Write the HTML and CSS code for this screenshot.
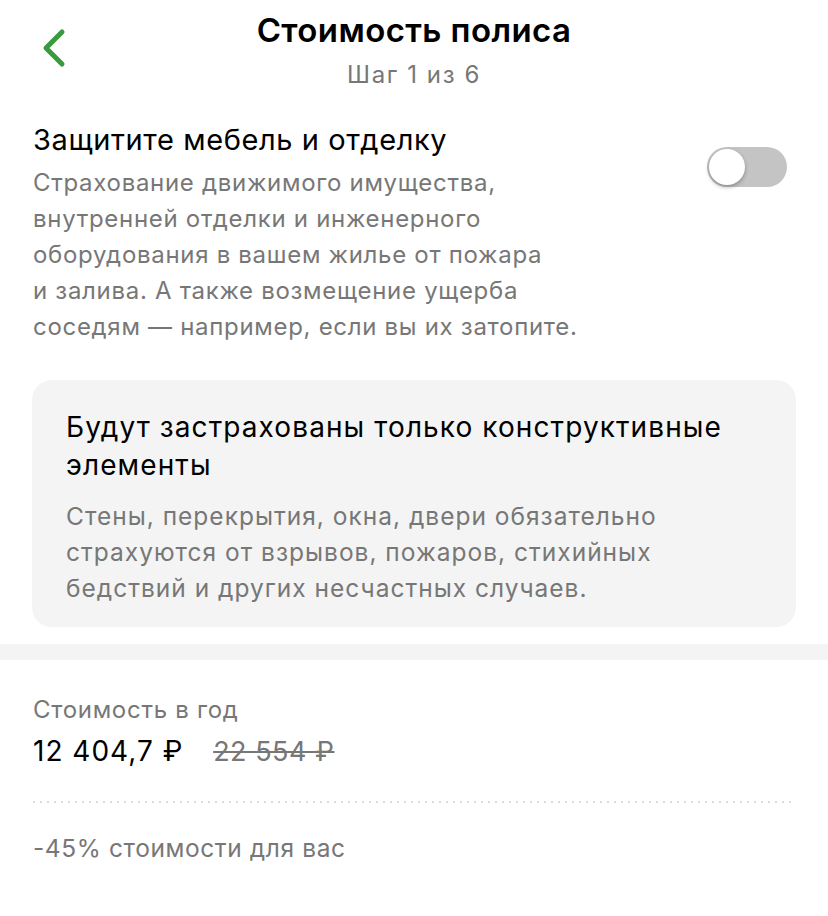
FILE: index.html
```html
<!DOCTYPE html>
<html>
    <head>
        <meta charset="UTF-8">
        <title>Стоимость полиса</title>
        <link rel="stylesheet" href="styles.css">
    </head>
    <body>
        <!-- шапка с кнопкой назад -->
        <div class="header">
            <a class="back" href="javascript:;">
                <svg width="28" height="44" viewBox="0 0 28 44">
                    <path d="M21 7 L5 23 L21 39" fill="none" stroke="#3a9a3f" stroke-width="5" stroke-linecap="round" stroke-linejoin="round"/>
                </svg>
            </a>
            <div class="title">Стоимость полиса</div>
            <div class="step">Шаг 1 из 6</div>
        </div>

        <div class="page">
            <div class="option">
                <div class="option-text">
                    <div class="option-title">Защитите мебель и отделку</div>
                    <div class="option-desc">Страхование движимого имущества,<br>внутренней отделки и инженерного<br>оборудования в вашем жилье от пожара<br>и залива. А также возмещение ущерба<br>соседям — например, если вы их затопите.</div>
                </div>
                <a class="toggle" href="javascript:;"><span class="knob"></span></a>
            </div>

            <div class="card">
                <div class="card-title">Будут застрахованы только конструктивные<br>элементы</div>
                <div class="card-desc">Стены, перекрытия, окна, двери обязательно<br>страхуются от взрывов, пожаров, стихийных<br>бедствий и других несчастных случаев.</div>
            </div>
        </div>

        <div class="divider"></div>

        <div class="page price">
            <div class="price-label">Стоимость в год</div>
            <div class="price-row">
                <span class="price-new">12 404,7 ₽</span>
                <span class="price-old">22 554 ₽</span>
            </div>
            <div class="dots"></div>
            <div class="discount">-45% стоимости для вас</div>
        </div>
    </body>
</html>
```

FILE: styles.css
```css
*{
    margin: 0;
    padding: 0;
    box-sizing: border-box;
}
body{
    width: 828px;
    background-color: #fff;
    font-family: "Inter", "Open Sans", sans-serif;
    color: #000;
}
.header{
    position: relative;
    padding-top: 8px;
    text-align: center;
}
.back{
    position: absolute;
    left: 41px;
    top: 25px;
    display: block;
    width: 28px;
    height: 44px;
}
.title{
    font-size: 33px;
    line-height: 44px;
    font-weight: 600;
    letter-spacing: 0.4px;
}
.step{
    margin-top: 8px;
    font-size: 24px;
    line-height: 30px;
    letter-spacing: 1.6px;
    color: #777;
}
.page{
    padding: 0 32px;
}
.option{
    display: flex;
    justify-content: space-between;
    margin-top: 32px;
}
.option-text{
    padding-left: 1px;
}
.option-title{
    font-size: 29px;
    line-height: 36px;
    letter-spacing: 0.6px;
}
.option-desc{
    margin-top: 7px;
    font-size: 24px;
    line-height: 36px;
    letter-spacing: 0.7px;
    color: #777;
}
.toggle{
    display: block;
    width: 80px;
    height: 40px;
    margin: 25px 9px 0 0;
    border-radius: 20px;
    background-color: #c4c4c4;
    padding: 2px;
}
.knob{
    display: block;
    width: 36px;
    height: 36px;
    border-radius: 50%;
    background-color: #fff;
    box-shadow: 0 2px 4px rgba(0, 0, 0, 0.3);
}
.card{
    margin-top: 35px;
    padding: 28px 34px 21px;
    border-radius: 20px;
    background-color: #f4f4f4;
}
.card-title{
    font-size: 28px;
    line-height: 38px;
    letter-spacing: 1.1px;
}
.card-desc{
    margin-top: 14px;
    font-size: 24.5px;
    line-height: 36px;
    letter-spacing: 1px;
    color: #777;
}
.divider{
    height: 16px;
    margin-top: 17px;
    background-color: #f4f4f4;
}
.price{
    padding-top: 34px;
    padding-left: 33px;
}
.price-label{
    font-size: 24px;
    line-height: 32px;
    letter-spacing: 0.7px;
    color: #777;
}
.price-row{
    margin-top: 7px;
    font-size: 28px;
    line-height: 36px;
    letter-spacing: 1px;
}
.price-old{
    margin-left: 21px;
    font-size: 27px;
    letter-spacing: 0.5px;
    color: #777;
    text-decoration: line-through;
}
.dots{
    height: 2px;
    margin-top: 31px;
    background-image: linear-gradient(to right, #dcdcdc 2px, transparent 2px);
    background-size: 7px 2px;
}
.discount{
    margin-top: 29px;
    font-size: 24.5px;
    line-height: 32px;
    letter-spacing: 0.6px;
    color: #777;
}
```
